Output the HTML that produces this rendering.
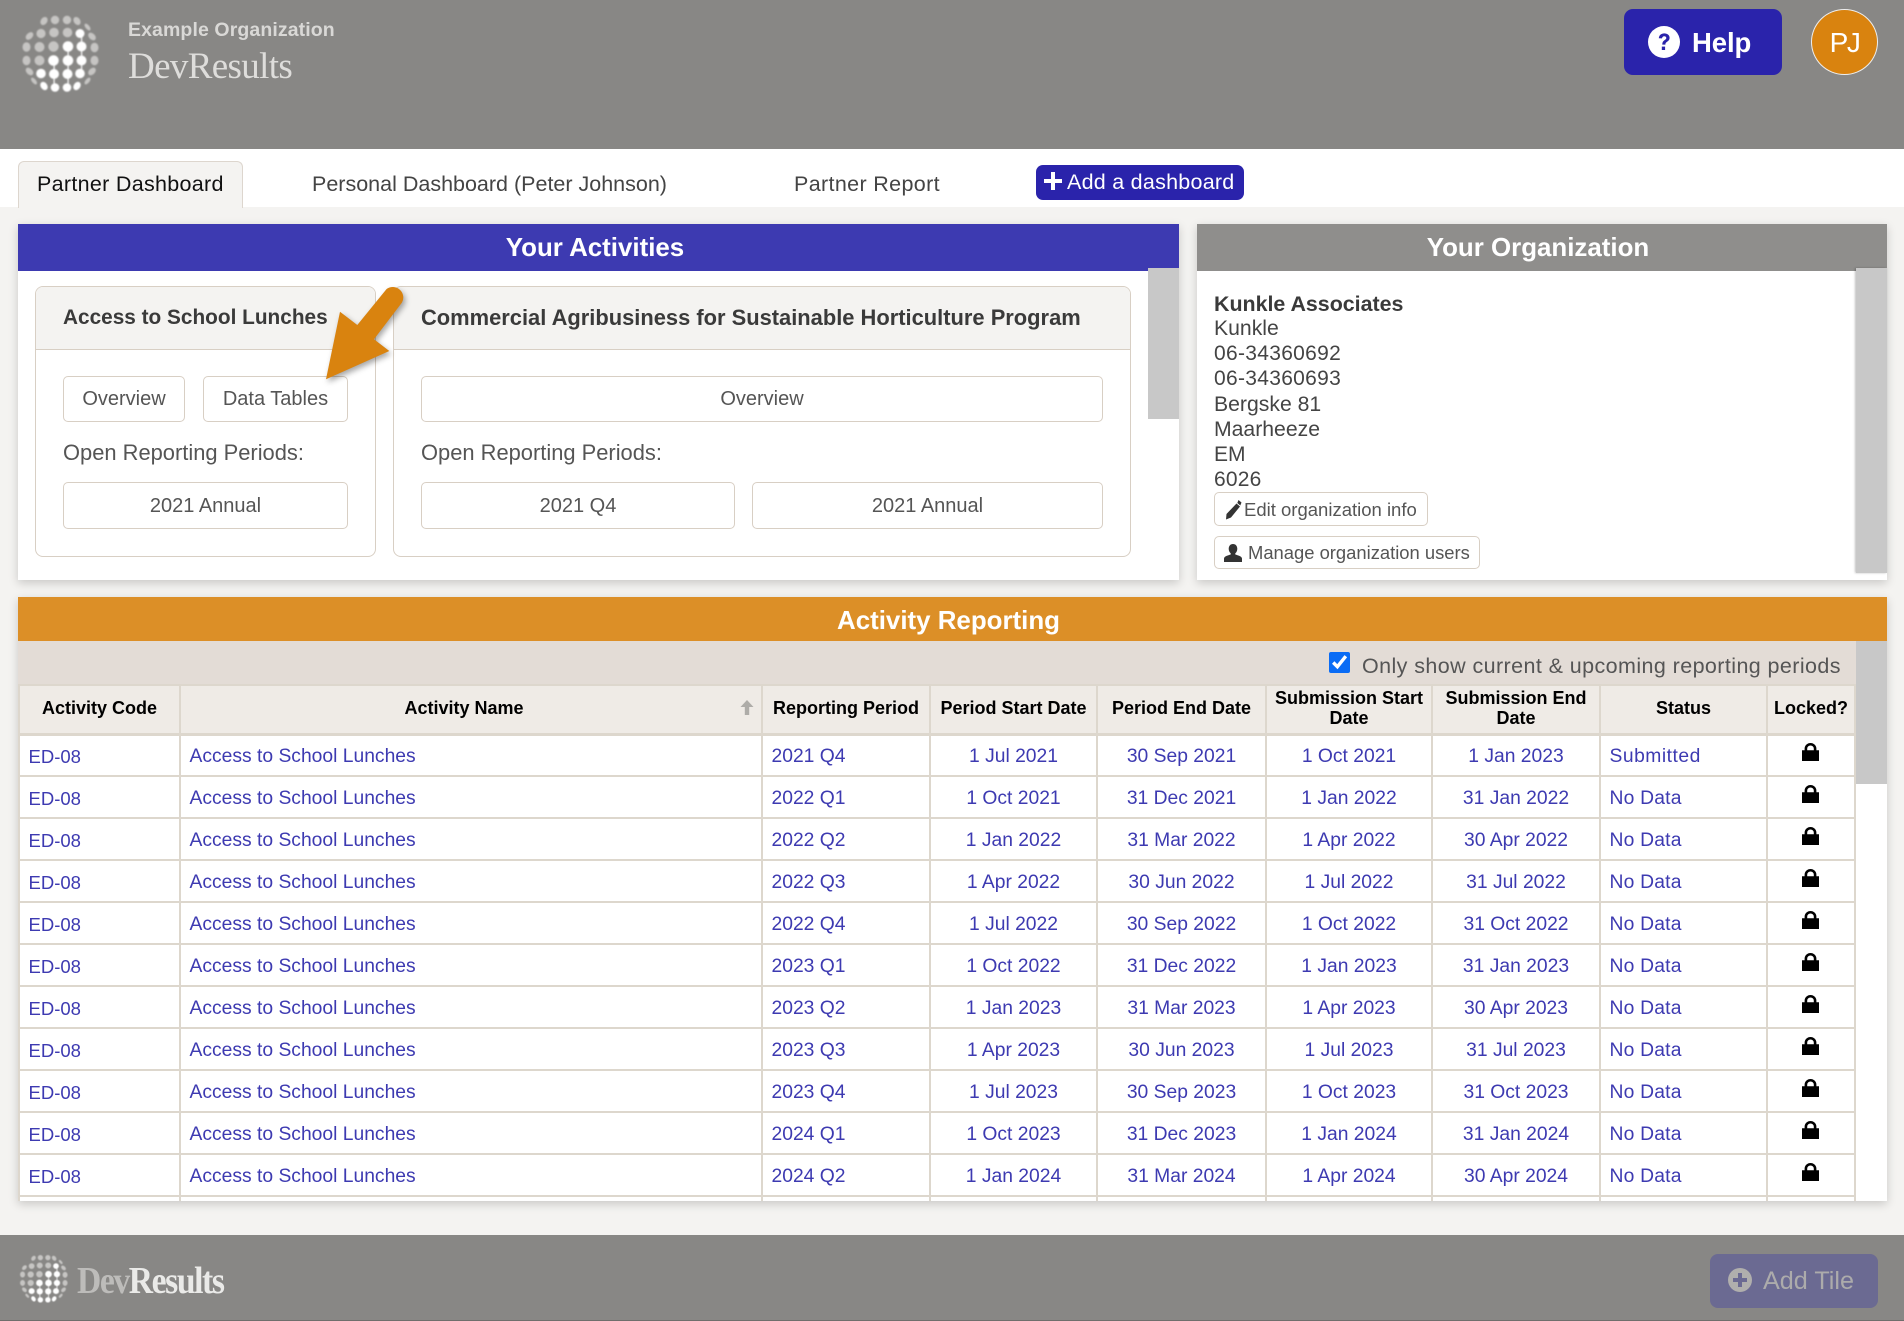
<!DOCTYPE html>
<html lang="en">
<head>
<meta charset="utf-8">
<title>DevResults Partner Dashboard</title>
<style>
html,body{margin:0;padding:0;width:1904px;height:1321px;overflow:hidden;background:#f4f3f1;font-family:"Liberation Sans",Arial,sans-serif;color:#444}
*{box-sizing:border-box}
.a{position:absolute}
.t{position:absolute;white-space:nowrap;line-height:24px}
.btn{position:absolute;background:#fff;border:1px solid #d8cfc4;border-radius:5px;text-align:center;color:#555;font-size:20px;white-space:nowrap}
.h{position:absolute;color:#fff;font-weight:bold;font-size:25.900px;text-align:center;line-height:49px;white-space:nowrap}
.panel{position:absolute;background:#fff;box-shadow:0 3px 9px rgba(0,0,0,.18)}
.card{position:absolute;border:1px solid #d8cfc4;border-radius:8px;background:#fff;overflow:hidden}
.card .hd{position:absolute;left:0;top:0;right:0;height:63px;background:#f4f3f1;border-bottom:1px solid #d8cfc4}
table{border-collapse:collapse;table-layout:fixed;position:absolute;left:18px;top:684px;width:1836px}
th,td{border:2px solid #ddd7cd;padding:0;font-size:19.300px;text-align:center;overflow:hidden;white-space:nowrap}
th{height:49px;background:#efebe6;color:#000;font-size:18px;line-height:20.700px;font-weight:bold;border-bottom-width:3px;padding-bottom:2px;white-space:normal}
td{height:42px;background:#fff;color:#3d3ab1;line-height:20px;padding-top:3px}
td.l{text-align:left;padding-left:8.500px}
td.c{font-size:18.500px}
td.s{letter-spacing:.2px}
td.k{padding-top:0;vertical-align:top}
td.k svg{display:block;margin:7.500px auto 0;position:relative;left:-.5px}
</style>
</head>
<body>
<svg width="0" height="0" style="position:absolute">
<defs>
<filter id="bl" x="-20%" y="-20%" width="140%" height="140%"><feGaussianBlur stdDeviation="0.850"/></filter>
<symbol id="globe" viewBox="0 0 120 110" overflow="visible">
<g filter="url(#bl)">
<g fill="#c6c5c3">
<ellipse cx="44" cy="21" rx="3.200" ry="4.400" transform="rotate(35 44 21)"/><circle cx="55" cy="20" r="4.200"/><circle cx="67" cy="20" r="4.200"/><ellipse cx="77" cy="21" rx="3.200" ry="4.400" transform="rotate(-35 77 21)"/><ellipse cx="87.500" cy="27" rx="2" ry="4" transform="rotate(-40 87.500 27)"/>
<ellipse cx="29.500" cy="36" rx="3" ry="4.500" transform="rotate(45 29.500 36)"/><circle cx="41" cy="33.500" r="4.600"/><circle cx="54" cy="32.500" r="4.800"/><circle cx="67.500" cy="32.500" r="4.800"/><ellipse cx="92" cy="36.500" rx="3" ry="4.500" transform="rotate(-45 92 36.500)"/>
<ellipse cx="26.500" cy="47" rx="4" ry="4.800"/><circle cx="39.500" cy="47" r="5"/><circle cx="53.500" cy="46.500" r="5.200"/><ellipse cx="94.500" cy="47.500" rx="4" ry="4.800"/>
<ellipse cx="26.500" cy="60.500" rx="4" ry="4.800"/><circle cx="39.500" cy="60.500" r="5"/><ellipse cx="94.500" cy="60.500" rx="4" ry="4.800"/>
<ellipse cx="29.500" cy="71.500" rx="3" ry="4.500" transform="rotate(-45 29.500 71.500)"/><ellipse cx="92" cy="71.500" rx="3" ry="4.500" transform="rotate(45 92 71.500)"/>
<ellipse cx="34" cy="81" rx="2" ry="4" transform="rotate(-40 34 81)"/><ellipse cx="87.500" cy="81" rx="2" ry="4" transform="rotate(40 87.500 81)"/>
</g>
<g fill="#fff">
<circle cx="80" cy="33.500" r="4.500"/>
<circle cx="68" cy="46.500" r="5.300"/><circle cx="81.500" cy="46.500" r="5"/>
<circle cx="53.500" cy="60.500" r="5.300"/><circle cx="68" cy="60.500" r="5.300"/><circle cx="81.500" cy="60.500" r="5"/>
<circle cx="41" cy="73.500" r="4.800"/><circle cx="54" cy="74" r="5"/><circle cx="67.500" cy="74" r="5"/><circle cx="80" cy="73.500" r="4.800"/>
<ellipse cx="44" cy="86" rx="3.300" ry="4.500" transform="rotate(-35 44 86)"/><circle cx="55" cy="87.500" r="4.300"/><circle cx="67" cy="87.500" r="4.300"/><ellipse cx="77" cy="86" rx="3.300" ry="4.500" transform="rotate(35 77 86)"/>
<rect x="67.500" y="46" width="1.200" height="42"/><rect x="81" y="34" width="1.200" height="40"/><rect x="53.500" y="60" width="1.200" height="28"/>
</g>
</g>
</symbol>
<symbol id="lock" viewBox="0 0 17 18">
<path d="M0 7.300h2.600V5.700a5.900 5.700 0 0 1 11.800 0v1.600H17V18H0zM5.200 7.300h6.600V5.700a3.300 3.200 0 0 0-6.600 0z" fill="#000"/>
</symbol>
</defs>
</svg>

<!-- header -->
<div class="a" style="left:0;top:0;width:1904px;height:149px;background:#888785"></div>
<svg class="a" style="left:0;top:0" width="120" height="110"><use href="#globe" width="120" height="110"/></svg>
<div class="t" style="left:128px;top:18px;font-size:19.500px;font-weight:bold;color:#d9d8d6;letter-spacing:.1px">Example Organization</div>
<div class="t" style="left:128px;top:50px;font-family:'Liberation Serif',serif;font-size:37px;line-height:34px;color:#dedddb;letter-spacing:-.650px">DevResults</div>
<div class="a" style="left:1624px;top:9px;width:158px;height:66px;background:#2a23ab;border-radius:9px"></div>
<svg class="a" style="left:1648px;top:26px" width="32" height="32" viewBox="0 0 32 32"><circle cx="16" cy="16" r="16" fill="#fff"/><path d="M10.800 12.200c.3-3.100 2.500-4.800 5.500-4.800 3.100 0 5.300 1.800 5.300 4.400 0 2-1 3-2.500 4-1.300.9-1.700 1.400-1.700 2.800h-3.100c0-2.200.6-3.300 2.200-4.400 1.200-.8 1.800-1.300 1.800-2.200 0-1-.8-1.700-2-1.700-1.300 0-2.100.8-2.300 2.100z" fill="#2a23ab"/><rect x="13.800" y="20.600" width="3.300" height="3.400" fill="#2a23ab"/></svg>
<div class="t" style="left:1692px;top:31px;font-size:27.500px;font-weight:bold;color:#fff;letter-spacing:-.1px">Help</div>
<div class="a" style="left:1811px;top:9px;width:67px;height:66px;border-radius:50%;background:#d9830f;border:1px solid #eee;color:#fff;font-size:28px;text-align:center;line-height:66px;letter-spacing:-1.500px">PJ</div>

<!-- tabs -->
<div class="a" style="left:0;top:149px;width:1904px;height:58px;background:#fff"></div>
<div class="a" style="left:18px;top:161px;width:225px;height:47px;background:#f4f3f1;border:1px solid #ddd6ce;border-bottom:0;border-radius:6px 6px 0 0"></div>
<div class="t" style="left:37px;top:172px;font-size:21.500px;color:#111;letter-spacing:.3px">Partner Dashboard</div>
<div class="t" style="left:312px;top:172px;font-size:21.500px;color:#444">Personal Dashboard (Peter Johnson)</div>
<div class="t" style="left:794px;top:172px;font-size:21.500px;color:#444;letter-spacing:.35px">Partner Report</div>
<div class="a" style="left:1036px;top:165px;width:208px;height:35px;background:#2a23ab;border-radius:7px"></div>
<svg class="a" style="left:1044px;top:172px" width="18" height="18" viewBox="0 0 18 18"><path d="M7 0h4v7h7v4h-7v7H7v-7H0V7h7z" fill="#fff"/></svg>
<div class="t" style="left:1067px;top:170px;font-size:21.500px;color:#fff;letter-spacing:.25px">Add a dashboard</div>

<!-- Your activities -->
<div class="panel" style="left:18px;top:224px;width:1161px;height:356px"></div>
<div class="a" style="left:18px;top:224px;width:1161px;height:47px;background:#3d3ab1"></div>
<div class="h" style="left:18px;top:224px;width:1154px">Your Activities</div>
<div class="a" style="left:1148px;top:268px;width:31px;height:151px;background:#c8c8c8"></div>

<div class="card" style="left:35px;top:286px;width:341px;height:271px"><div class="hd"></div></div>
<div class="t" style="left:63px;top:306px;font-size:20.800px;font-weight:bold;color:#3a3a3a">Access to School Lunches</div>
<div class="btn" style="left:63px;top:376px;width:122px;height:46px;line-height:45px">Overview</div>
<div class="btn" style="left:203px;top:376px;width:145px;height:46px;line-height:45px">Data Tables</div>
<div class="t" style="left:63px;top:441px;font-size:21.900px;color:#555">Open Reporting Periods:</div>
<div class="btn" style="left:63px;top:482px;width:285px;height:47px;line-height:46px">2021 Annual</div>

<div class="card" style="left:393px;top:286px;width:738px;height:271px"><div class="hd"></div></div>
<div class="t" style="left:421px;top:306px;font-size:21.900px;font-weight:bold;color:#3a3a3a">Commercial Agribusiness for Sustainable Horticulture Program</div>
<div class="btn" style="left:421px;top:376px;width:682px;height:46px;line-height:45px">Overview</div>
<div class="t" style="left:421px;top:441px;font-size:21.900px;color:#555">Open Reporting Periods:</div>
<div class="btn" style="left:421px;top:482px;width:314px;height:47px;line-height:46px">2021 Q4</div>
<div class="btn" style="left:752px;top:482px;width:351px;height:47px;line-height:46px">2021 Annual</div>

<!-- arrow -->
<svg class="a" style="left:300px;top:270px;filter:drop-shadow(2px 3px 3px rgba(0,0,0,.35))" width="130" height="130" viewBox="300 270 130 130">
<path d="M326 379.300L340 311.700 357.300 325 386.600 289A10.500 10.500 0 0 1 402 302.500L374 339.300 389.300 351z" fill="#d9830f"/>
</svg>

<!-- Your organization -->
<div class="panel" style="left:1197px;top:224px;width:690px;height:356px"></div>
<div class="a" style="left:1197px;top:224px;width:690px;height:47px;background:#8f8e8c"></div>
<div class="h" style="left:1197px;top:224px;width:682px">Your Organization</div>
<div class="a" style="left:1856px;top:268px;width:31px;height:305px;background:#c8c8c8;box-shadow:-1px 0 2px rgba(0,0,0,.25)"></div>
<div class="t" style="left:1214px;top:292px;font-size:21.400px;font-weight:bold;color:#3a3a3a">Kunkle Associates</div>
<div class="t" style="left:1214px;top:317px;font-size:21.200px;color:#444">Kunkle</div>
<div class="t" style="left:1214px;top:342px;font-size:21px;color:#444;letter-spacing:.3px">06-34360692</div>
<div class="t" style="left:1214px;top:367px;font-size:21px;color:#444;letter-spacing:.3px">06-34360693</div>
<div class="t" style="left:1214px;top:393px;font-size:21.200px;color:#444">Bergske 81</div>
<div class="t" style="left:1214px;top:418px;font-size:21.200px;color:#444">Maarheeze</div>
<div class="t" style="left:1214px;top:443px;font-size:21px;color:#444">EM</div>
<div class="t" style="left:1214px;top:468px;font-size:21px;color:#444;letter-spacing:.2px">6026</div>
<div class="btn" style="left:1214px;top:492px;width:214px;height:34px"></div>
<svg class="a" style="left:1224px;top:500px" width="18" height="20" viewBox="0 0 18 20"><path d="M12.500 3.500l3.500 3-9 11-5 2 .5-5.500zM14.500 0l3 2.500-1.200 3-3-2.500z" fill="#333"/></svg>
<div class="t" style="left:1244px;top:498px;font-size:18.500px;color:#555">Edit organization info</div>
<div class="btn" style="left:1214px;top:536px;width:266px;height:33px"></div>
<svg class="a" style="left:1224px;top:544px" width="18" height="18" viewBox="0 0 18 18"><path d="M9 0c2.700 0 4.300 2.100 4.300 4.800 0 2-.8 3.600-2 4.500v1.200c2 .8 6.700 1.700 6.700 4v3.500H0v-3.500c0-2.300 4.700-3.200 6.700-4V9.300c-1.200-.9-2-2.500-2-4.500C4.700 2.100 6.300 0 9 0z" fill="#333"/></svg>
<div class="t" style="left:1248px;top:541px;font-size:18.400px;color:#555">Manage organization users</div>

<!-- Activity reporting -->
<div class="panel" style="left:18px;top:597px;width:1869px;height:604px"></div>
<div class="a" style="left:18px;top:597px;width:1869px;height:44px;background:#dc8f27"></div>
<div class="h" style="left:18px;top:597px;width:1861px;line-height:48px">Activity Reporting</div>
<div class="a" style="left:18px;top:641px;width:1838px;height:43px;background:#e3dcd6"></div>
<div class="a" style="left:1856px;top:641px;width:31px;height:143px;background:#c8c8c8"></div>
<input type="checkbox" checked style="position:absolute;left:1329px;top:652px;width:21px;height:21px;margin:0;accent-color:#0a6cf5">
<div class="t" style="left:1362px;top:654px;font-size:21.500px;color:#555;letter-spacing:.41px">Only show current &amp; upcoming reporting periods</div>

<div class="a" style="left:0;top:0;width:1904px;height:1201px;overflow:hidden;pointer-events:none">
<table>
<colgroup><col style="width:161px"><col style="width:582px"><col style="width:168px"><col style="width:167px"><col style="width:169px"><col style="width:166px"><col style="width:168px"><col style="width:167px"><col style="width:88px"></colgroup>
<tr><th>Activity Code</th><th style="padding-right:14px">Activity Name</th><th>Reporting Period</th><th>Period Start Date</th><th>Period End Date</th><th>Submission Start<br>Date</th><th>Submission End<br>Date</th><th>Status</th><th>Locked?</th></tr>
<tr><td class="l c">ED-08</td><td class="l">Access to School Lunches</td><td class="l">2021 Q4</td><td>1 Jul 2021</td><td>30 Sep 2021</td><td>1 Oct 2021</td><td>1 Jan 2023</td><td class="l s" style="letter-spacing:.5px">Submitted</td><td class="k"><svg width="17" height="18"><use href="#lock"/></svg></td></tr>
<tr><td class="l c">ED-08</td><td class="l">Access to School Lunches</td><td class="l">2022 Q1</td><td>1 Oct 2021</td><td>31 Dec 2021</td><td>1 Jan 2022</td><td>31 Jan 2022</td><td class="l s">No Data</td><td class="k"><svg width="17" height="18"><use href="#lock"/></svg></td></tr>
<tr><td class="l c">ED-08</td><td class="l">Access to School Lunches</td><td class="l">2022 Q2</td><td>1 Jan 2022</td><td>31 Mar 2022</td><td>1 Apr 2022</td><td>30 Apr 2022</td><td class="l s">No Data</td><td class="k"><svg width="17" height="18"><use href="#lock"/></svg></td></tr>
<tr><td class="l c">ED-08</td><td class="l">Access to School Lunches</td><td class="l">2022 Q3</td><td>1 Apr 2022</td><td>30 Jun 2022</td><td>1 Jul 2022</td><td>31 Jul 2022</td><td class="l s">No Data</td><td class="k"><svg width="17" height="18"><use href="#lock"/></svg></td></tr>
<tr><td class="l c">ED-08</td><td class="l">Access to School Lunches</td><td class="l">2022 Q4</td><td>1 Jul 2022</td><td>30 Sep 2022</td><td>1 Oct 2022</td><td>31 Oct 2022</td><td class="l s">No Data</td><td class="k"><svg width="17" height="18"><use href="#lock"/></svg></td></tr>
<tr><td class="l c">ED-08</td><td class="l">Access to School Lunches</td><td class="l">2023 Q1</td><td>1 Oct 2022</td><td>31 Dec 2022</td><td>1 Jan 2023</td><td>31 Jan 2023</td><td class="l s">No Data</td><td class="k"><svg width="17" height="18"><use href="#lock"/></svg></td></tr>
<tr><td class="l c">ED-08</td><td class="l">Access to School Lunches</td><td class="l">2023 Q2</td><td>1 Jan 2023</td><td>31 Mar 2023</td><td>1 Apr 2023</td><td>30 Apr 2023</td><td class="l s">No Data</td><td class="k"><svg width="17" height="18"><use href="#lock"/></svg></td></tr>
<tr><td class="l c">ED-08</td><td class="l">Access to School Lunches</td><td class="l">2023 Q3</td><td>1 Apr 2023</td><td>30 Jun 2023</td><td>1 Jul 2023</td><td>31 Jul 2023</td><td class="l s">No Data</td><td class="k"><svg width="17" height="18"><use href="#lock"/></svg></td></tr>
<tr><td class="l c">ED-08</td><td class="l">Access to School Lunches</td><td class="l">2023 Q4</td><td>1 Jul 2023</td><td>30 Sep 2023</td><td>1 Oct 2023</td><td>31 Oct 2023</td><td class="l s">No Data</td><td class="k"><svg width="17" height="18"><use href="#lock"/></svg></td></tr>
<tr><td class="l c">ED-08</td><td class="l">Access to School Lunches</td><td class="l">2024 Q1</td><td>1 Oct 2023</td><td>31 Dec 2023</td><td>1 Jan 2024</td><td>31 Jan 2024</td><td class="l s">No Data</td><td class="k"><svg width="17" height="18"><use href="#lock"/></svg></td></tr>
<tr><td class="l c">ED-08</td><td class="l">Access to School Lunches</td><td class="l">2024 Q2</td><td>1 Jan 2024</td><td>31 Mar 2024</td><td>1 Apr 2024</td><td>30 Apr 2024</td><td class="l s">No Data</td><td class="k"><svg width="17" height="18"><use href="#lock"/></svg></td></tr>
<tr><td>&nbsp;</td><td>&nbsp;</td><td>&nbsp;</td><td>&nbsp;</td><td>&nbsp;</td><td>&nbsp;</td><td>&nbsp;</td><td>&nbsp;</td><td>&nbsp;</td></tr>
</table>
</div>
<svg class="a" style="left:740px;top:700px" width="14" height="15" viewBox="0 0 14 15"><path d="M7 0l6.500 7H9.200v8H4.800V7H.5z" fill="#aeaca8"/></svg>

<!-- footer -->
<div class="a" style="left:0;top:1235px;width:1904px;height:86px;background:#888785;border-bottom:1px solid #6f6e6c"></div>
<svg class="a" style="left:6px;top:1245px" width="75" height="69" viewBox="0 0 120 110"><use href="#globe" width="120" height="110"/></svg>
<div class="t" style="left:77px;top:1262px;font-family:'Liberation Serif',serif;font-weight:bold;font-size:38px;line-height:38px;letter-spacing:-1.600px;color:#eaeae8;transform:scaleX(.885);transform-origin:0 50%"><span style="color:#bdbcba">Dev</span>Results</div>
<div class="a" style="left:1710px;top:1254px;width:168px;height:54px;background:#6b6a92;border-radius:8px"></div>
<svg class="a" style="left:1728px;top:1268px" width="24" height="24" viewBox="0 0 24 24"><circle cx="12" cy="12" r="12" fill="#b0afad"/><path d="M10 5h4v5h5v4h-5v5h-4v-5H5v-4h5z" fill="#6b6a92"/></svg>
<div class="t" style="left:1763px;top:1269px;font-size:25.200px;color:#acabab">Add Tile</div>
</body>
</html>
